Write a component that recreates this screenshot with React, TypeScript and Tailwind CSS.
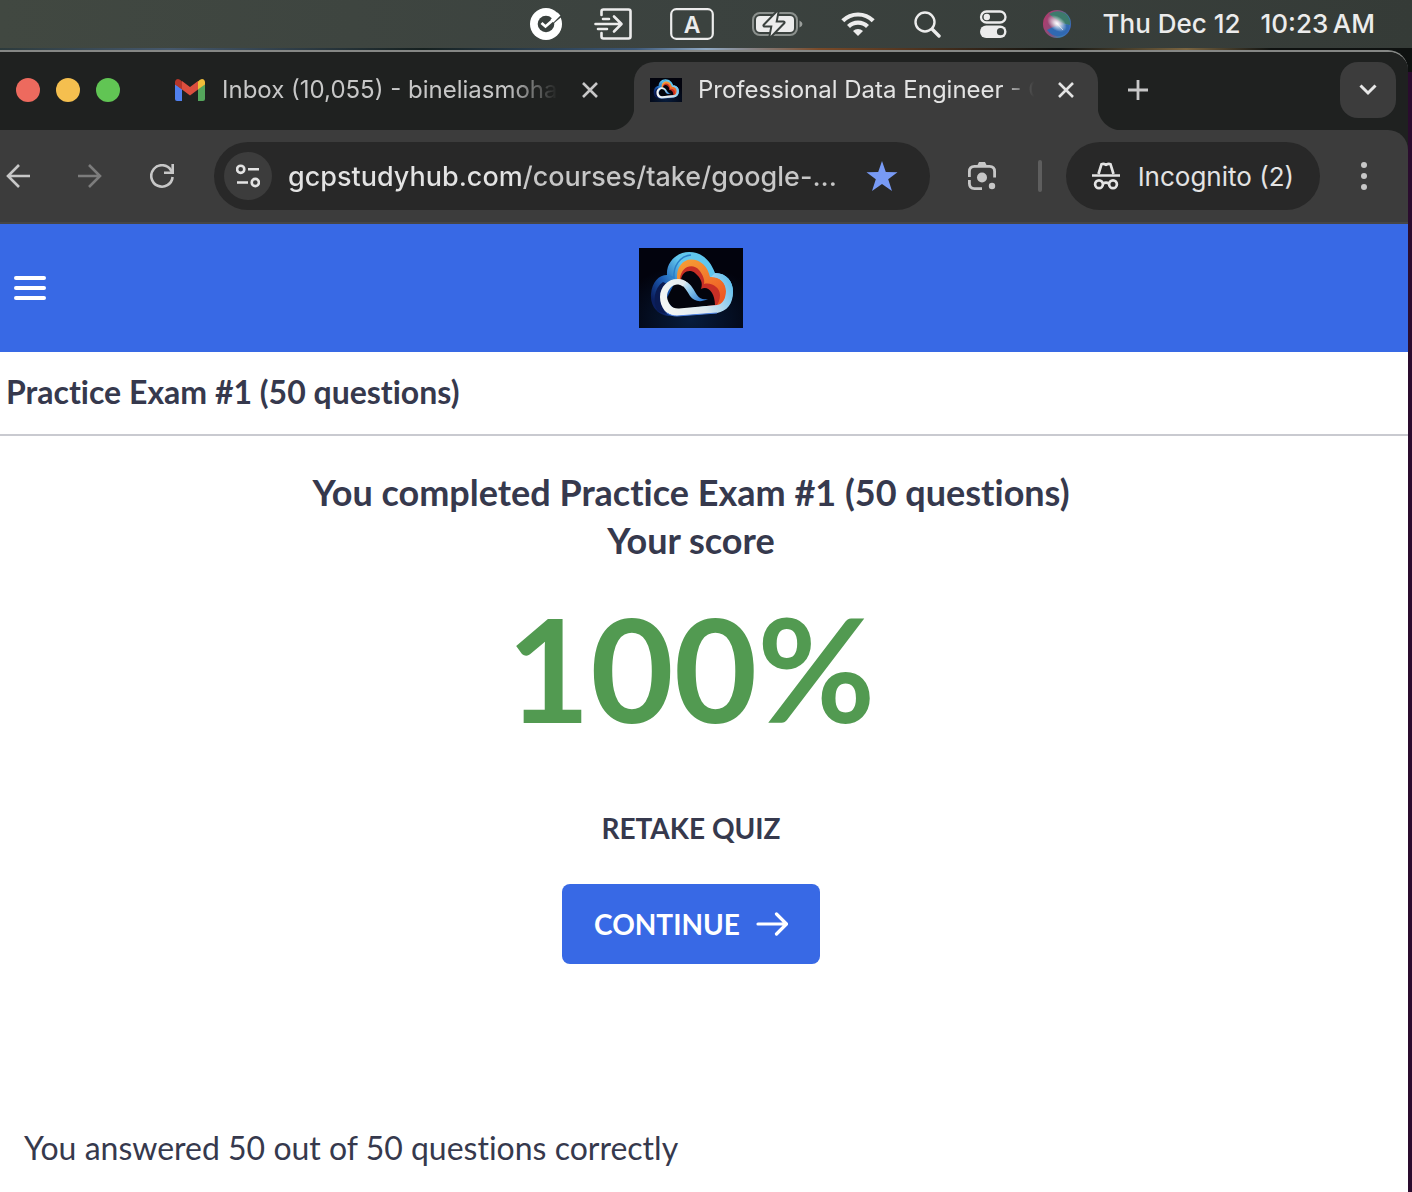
import React from "react";

function CloudLogo({ className, id }: { className: string; id: string }) {
  return (
    <svg viewBox="0 0 104 80" preserveAspectRatio="none" className={className} role="img" aria-label="GCP Study Hub">
      <defs>
        <linearGradient id={id + "back"} x1="0" y1="0.7" x2="1" y2="0.2">
          <stop offset="0" stopColor="#0b1f5e" />
          <stop offset="0.22" stopColor="#1c5cb4" />
          <stop offset="0.5" stopColor="#62c8ee" />
          <stop offset="1" stopColor="#5ec4ee" />
        </linearGradient>
        <linearGradient id={id + "loop"} x1="0" y1="0.6" x2="1" y2="0.3">
          <stop offset="0" stopColor="#f4f6f4" />
          <stop offset="0.5" stopColor="#dfe9ee" />
          <stop offset="0.75" stopColor="#a8d4ee" />
          <stop offset="1" stopColor="#62c0ee" />
        </linearGradient>
        <linearGradient id={id + "swoosh"} gradientUnits="userSpaceOnUse" x1="44" y1="34" x2="64" y2="52">
          <stop offset="0" stopColor="#e6eef0" />
          <stop offset="0.4" stopColor="#8cc8ec" />
          <stop offset="1" stopColor="#2f7ad0" />
        </linearGradient>
        <linearGradient id={id + "fire"} x1="0" y1="0" x2="0.6" y2="1">
          <stop offset="0" stopColor="#f7a136" />
          <stop offset="1" stopColor="#ee5a24" />
        </linearGradient>
        <radialGradient id={id + "bg"} cx="0.5" cy="0.9" r="0.7">
          <stop offset="0" stopColor="#071c3c" />
          <stop offset="1" stopColor="#02030d" />
        </radialGradient>
      </defs>
      <rect width="104" height="80" fill={"url(#" + id + "bg)"} />
      <path d="M34 68C20 69 11 59 12 46C13 34 20 27 28 27C27 14 38 4 50 4C64 4 72 14 76 25C88 25 94 34 94 44C93 54 88 62 76 64Z" fill={"url(#" + id + "back)"} />
      <path d="M19 63C13 54 15 40 24 34L28 36C21 43 20 56 27 66Z" fill="#0a1b52" />
      <path d="M28 27C31 28 33 29 35 30C34 18 41 8 52 7" fill="none" stroke="#2a7fcb" strokeWidth="1.500" />
      <path d="M38 32C37 19 44 11.500 52 11.500C62 11.500 69 19 71 29C80 28 87 34 87 43C87 52 84 57 78 58L60 58Z" fill={"url(#" + id + "fire)"} />
      <path d="M41 31C42 18 54 15 60 22C64 27 66 32 65 36C73 34 81 40 81 47C81 52 79 56 77 58L60 58Z" fill="#c72f26" />
      <path d="M42 32C43 23 51 21 56 25C62 30 64 35 62 41C69 37 76 45 76 57L36 62L27 52L35 36Z" fill="#03040c" />
      <path d="M46 33C53 36 55 43 58 47C61 51 64 52 69 51C61 55 55 53 51 48C48 43 46 39 42 37Z" fill={"url(#" + id + "swoosh)"} />
      <path d="M94 44C94 56 88 63 78 65L38 68C28 68 21 60 21 49C21 38 30 30 40 31C43 31 45 32 47 33.500L44 38.500C42 37 40 36.500 38 36.500C32 37 28 43 28 49C29 56 33 61 40 60.500L78 57C84 56 87 50 87 43C87 35 81 29 72 29L76 25C88 25 94 34 94 44Z" fill={"url(#" + id + "loop)"} />
      <path d="M78 65L38 68C34 68 31 67 28 65" fill="none" stroke="#4a7fe0" strokeWidth="1" />
    </svg>
  );
}

function MenuBar() {
  return (
    <div className="flex h-12 items-center justify-end gap-[38px] bg-[#3a413d] bg-linear-to-r from-[#414841] via-[#3b423f] to-[#353b37] pr-[37px] text-[#ececec]">
      <div className="flex items-center gap-8">
        <svg viewBox="0 0 32 32" className="size-8">
          <circle cx="16" cy="16" r="16" fill="#fff" />
          <circle cx="16" cy="16" r="8.3" fill="#3a413e" />
          <path d="M17 19L32 6.500" fill="none" stroke="#3a413e" strokeWidth="3" />
          <path d="M22 13L29 6" fill="none" stroke="#fff" strokeWidth="4" />
          <path d="M11.500 15L15.500 18.500L23 12" fill="none" stroke="#fff" strokeWidth="2.800" />
        </svg>
        <svg viewBox="0 0 38 32" className="h-8 w-[38px]" fill="none" stroke="currentColor" strokeWidth="2.600" strokeLinecap="round" strokeLinejoin="round">
          <path d="M7.500 7V3.500Q7.500 1.500 9.500 1.500H34.500Q36.500 1.500 36.500 3.500V28.500Q36.500 30.500 34.500 30.500H9.500Q7.500 30.500 7.500 28.500V25" />
          <path d="M1.500 16H27M20 8.500L27.500 16L20 23.500M9 11H15M4 21H13" />
        </svg>
      </div>
      <svg viewBox="0 0 44 32" className="h-8 w-11">
        <rect x="1.200" y="1.200" width="41.600" height="29.600" rx="5" fill="none" stroke="currentColor" strokeWidth="2.200" />
        <text x="22" y="24.500" textAnchor="middle" fill="currentColor" fontFamily="Inter, sans-serif" fontWeight="600" fontSize="23">A</text>
      </svg>
      <svg viewBox="0 0 51 26" className="h-[26px] w-[51px]">
        <rect x="1" y="2" width="44" height="22" rx="7" fill="none" stroke="#8b908d" strokeWidth="2" />
        <path d="M47.500 9.500Q50.500 11 50.500 13T47.500 16.500Z" fill="#9a9e9b" />
        <rect x="4" y="5" width="38" height="16" rx="4" fill="currentColor" />
        <path d="M25.500 1L12.500 14.500H20.500L18.500 25L31.500 11.500H23.500Z" fill="currentColor" stroke="#3a413e" strokeWidth="4" strokeLinejoin="round" />
        <path d="M25.500 1L12.500 14.500H20.500L18.500 25L31.500 11.500H23.500Z" fill="currentColor" />
      </svg>
      <svg viewBox="0 0 34 26" className="h-[26px] w-[34px]" fill="none" stroke="currentColor" strokeWidth="4.200">
        <path d="M1.800 9.800A21.500 21.500 0 0 1 32.200 9.800" />
        <path d="M7.500 15.500A13.500 13.500 0 0 1 26.500 15.500" />
        <path d="M12 20A7.200 7.200 0 0 1 22 20L17 25Z" fill="currentColor" stroke="none" />
      </svg>
      <svg viewBox="0 0 28 28" className="size-7" fill="none" stroke="currentColor" strokeLinecap="round">
        <circle cx="12" cy="12" r="9.500" strokeWidth="2.400" />
        <path d="M19.500 19.500L26 26" strokeWidth="3.400" />
      </svg>
      <div className="flex items-center gap-9">
        <svg viewBox="0 0 28 28" className="size-7" fill="none" stroke="currentColor">
          <rect x="2" y="1.500" width="24.500" height="11" rx="5.500" strokeWidth="2.300" />
          <circle cx="7.800" cy="7" r="3.200" fill="currentColor" stroke="none" />
          <rect x="1" y="15.500" width="26.500" height="12.500" rx="6.200" fill="currentColor" stroke="none" />
          <circle cx="21.500" cy="21.700" r="3.600" fill="#3a413e" stroke="none" />
        </svg>
        <svg viewBox="0 0 28 28" className="size-7">
          <defs>
            <radialGradient id="siriGlow" cx="0.5" cy="0.5" r="0.5">
              <stop offset="0" stopColor="#fff" />
              <stop offset="0.25" stopColor="#fff" stopOpacity="0.8" />
              <stop offset="1" stopColor="#fff" stopOpacity="0" />
            </radialGradient>
            <linearGradient id="siriBase" x1="0" y1="0.3" x2="1" y2="0.7">
              <stop offset="0" stopColor="#b23a6c" />
              <stop offset="0.45" stopColor="#84517d" />
              <stop offset="0.75" stopColor="#3c7fae" />
              <stop offset="1" stopColor="#3b62c4" />
            </linearGradient>
          </defs>
          <circle cx="14" cy="14" r="14" fill="url(#siriBase)" />
          <path d="M6 4Q15-2 24 5Q28 10 27 15Q18 14 6 4Z" fill="#3d7a6c" />
          <path d="M4 20Q12 30 22 24Q27 20 26 15Q14 14 4 20Z" fill="#3069b2" />
          <ellipse cx="14" cy="13.500" rx="11" ry="7" fill="url(#siriGlow)" transform="rotate(35 14 13.500)" />
          <path d="M14 13.500L20 20" stroke="#fff" strokeOpacity="0.6" />
        </svg>
        <div className="-ml-1 flex gap-5 text-[26px] leading-8 font-medium whitespace-nowrap">
          <span>Thu Dec 12</span>
          <span>10:23{"\u2009"}AM</span>
        </div>
      </div>
    </div>
  );
}

function CloseIcon() {
  return (
    <svg viewBox="0 0 16 16" className="size-4" fill="none" stroke="currentColor" strokeWidth="2.600">
      <path d="M1 1L15 15M15 1L1 15" />
    </svg>
  );
}

function TabStrip() {
  return (
    <div className="flex h-[78px] items-start bg-[#1f2120] pt-2.5 pr-3 pl-4">
      <div className="flex h-14 shrink-0 items-center gap-4">
        <button aria-label="Close window" className="size-6 rounded-full bg-[#ed6a5e]" />
        <button aria-label="Minimize window" className="size-6 rounded-full bg-[#f5bf4f]" />
        <button aria-label="Zoom window" className="size-6 rounded-full bg-[#61c554]" />
      </div>
      <div className="ml-[55px] flex h-14 w-[459px] min-w-0 items-center text-[#c7c7c7]">
        <svg viewBox="0 0 30 22" className="h-[22px] w-[30px] shrink-0">
          <path d="M0 5L7 10V22H2Q0 22 0 20Z" fill="#5080ee" />
          <path d="M30 5L23 10V22H28Q30 22 30 20Z" fill="#54a55b" />
          <path d="M23 2.500V10.500L30 5.500V3Q29.500 0 27 0Q25 0 23 2.500Z" fill="#f0bd3a" />
          <path d="M7 2.500V10.500L0 5.500V3Q0.500 0 3 0Q5 0 7 2.500Z" fill="#b5362a" />
          <path d="M7 2L15 8L23 2V10.500L15 16.500L7 10.500Z" fill="#dc4e3e" />
        </svg>
        <span className="ml-[17px] min-w-0 flex-1 overflow-hidden text-2xl whitespace-nowrap mask-r-from-85%">Inbox (10,055) - bineliasmoha</span>
        <button aria-label="Close tab" className="ml-6 flex size-4 shrink-0 items-center justify-center">
          <CloseIcon />
        </button>
        <span className="w-9 shrink-0" />
      </div>
      <div className="relative flex h-[68px] w-[464px] min-w-0 items-center rounded-t-[20px] bg-[#3c3c3c] pr-6 pb-3 pl-4 text-[#e3e3e3]">
        <span className="absolute bottom-0 -left-6 size-6 bg-[radial-gradient(circle_at_0_0,transparent_24px,#3c3c3c_25px)]" />
        <span className="absolute -right-6 bottom-0 size-6 bg-[radial-gradient(circle_at_100%_0,transparent_24px,#3c3c3c_25px)]" />
        <CloudLogo id="tab" className="h-6 w-8 shrink-0" />
        <span className="ml-4 min-w-0 flex-1 overflow-hidden text-2xl whitespace-nowrap mask-r-from-90%">Professional Data Engineer - G</span>
        <button aria-label="Close tab" className="ml-6 flex size-4 shrink-0 items-center justify-center">
          <CloseIcon />
        </button>
      </div>
      <button aria-label="New tab" className="ml-[30px] flex h-14 w-5 shrink-0 items-center justify-center text-[#c7c7c7]">
        <svg viewBox="0 0 20 20" className="size-5" stroke="currentColor" strokeWidth="2.800">
          <path d="M0 10H20M10 0V20" />
        </svg>
      </button>
      <button aria-label="Search tabs" className="ml-auto flex size-14 shrink-0 items-center justify-center rounded-[18px] bg-[#3c3c3c] text-[#e8e8e8]">
        <svg viewBox="0 0 18 12" className="h-3 w-[18px]" fill="none" stroke="currentColor" strokeWidth="3">
          <path d="M1.500 1.500L9 9L16.500 1.500" />
        </svg>
      </button>
    </div>
  );
}

function Toolbar() {
  return (
    <div className="flex h-[94px] items-center rounded-tr-[20px] border-b-2 border-[#464646] bg-[#3c3c3c] pr-[38px] pl-1.5 text-[#c7c7c7]">
      <div className="flex shrink-0 items-center gap-12">
        <button aria-label="Back">
          <svg viewBox="0 0 24 24" className="size-6" fill="none" stroke="currentColor" strokeWidth="2.600">
            <path d="M24 12H2M13 1L2 12L13 23" />
          </svg>
        </button>
        <button aria-label="Forward" className="text-[#7c7c7c]">
          <svg viewBox="0 0 24 24" className="size-6" fill="none" stroke="currentColor" strokeWidth="2.600">
            <path d="M0 12H22M11 1L22 12L11 23" />
          </svg>
        </button>
        <button aria-label="Reload">
          <svg viewBox="0 0 24 24" className="size-6" fill="none" stroke="currentColor" strokeWidth="2.600">
            <path d="M22.600 13A10.700 10.700 0 1 1 21 6.200L22 8" />
            <path d="M22.700 0V8.700H14" />
          </svg>
        </button>
      </div>
      <div className="ml-10 flex h-[68px] min-w-0 flex-1 items-center rounded-full bg-[#282828] pr-8 pl-2.5">
        <button aria-label="View site information" className="flex size-12 shrink-0 items-center justify-center rounded-full bg-[#3c3c3c] text-[#e3e3e3]">
          <svg viewBox="0 0 24 24" className="size-6" fill="none" stroke="currentColor" strokeWidth="2.600">
            <circle cx="4.700" cy="5.300" r="3.600" />
            <path d="M12 5.300H23M1 18.500H12" />
            <circle cx="19.300" cy="18.500" r="3.600" />
          </svg>
        </button>
        <input
          aria-label="Address and search bar"
          defaultValue="gcpstudyhub.com/courses/take/google-..."
          className="ml-4 w-full min-w-0 flex-1 bg-[linear-gradient(90deg,#e3e3e3_236px,#c7c7c7_236px)] bg-clip-text pt-0.5 text-[27px] leading-10 font-medium text-transparent outline-none"
        />
        <button aria-label="Edit bookmark" className="ml-4 shrink-0 text-[#789af5]">
          <svg viewBox="0 0 32 30" className="h-[30px] w-8">
            <path d="M16 0L19.800 11L31.500 11.200L22.200 18.300L26 30L16 23L6 30L9.800 18.300L0.500 11.200L12.200 11Z" fill="currentColor" />
          </svg>
        </button>
      </div>
      <button aria-label="Search with Google Lens" className="ml-[38px] shrink-0">
        <svg viewBox="0 0 28 28" className="size-7" fill="none" stroke="currentColor" strokeWidth="2.800">
          <path d="M1.400 15V9.500Q1.400 4.400 6.500 4.400H21.500Q26.600 4.400 26.600 9.500V15.500M1.400 18V21.500Q1.400 26.600 6.500 26.600H14" />
          <path d="M9 4L11 0H17L19 4Z" fill="currentColor" stroke="none" />
          <circle cx="14" cy="15.500" r="5" fill="currentColor" stroke="none" />
          <circle cx="24" cy="24" r="3.200" fill="currentColor" stroke="none" />
        </svg>
      </button>
      <span className="ml-[42px] h-8 w-1 shrink-0 rounded-full bg-[#5e5e5e]" />
      <button className="ml-6 flex h-[68px] shrink-0 items-center rounded-full bg-[#282828] px-[26px] text-[#e3e3e3]">
        <svg viewBox="0 0 28 28" className="size-7" fill="none" stroke="currentColor" strokeWidth="2.700">
          <path d="M0 13.500H28" />
          <path d="M6.500 12L9.500 2.200Q11.500 1.500 14 2.700Q16.500 1.500 18.500 2.200L21.500 12" />
          <circle cx="7" cy="22.200" r="3.900" />
          <circle cx="21" cy="22.200" r="3.900" />
          <path d="M11 21.500Q14 19.800 17 21.500" />
        </svg>
        <span className="ml-[18px] pt-0.5 text-[26px] leading-10 whitespace-nowrap">Incognito (2)</span>
      </button>
      <button aria-label="Browser menu" className="ml-[38px] flex w-3 shrink-0 flex-col items-center gap-[5px]">
        <span className="size-1.5 rounded-full bg-current" />
        <span className="size-1.5 rounded-full bg-current" />
        <span className="size-1.5 rounded-full bg-current" />
      </button>
    </div>
  );
}

function QuizPage() {
  return (
    <div className="flex flex-1 flex-col bg-white font-['Lato',sans-serif] text-[#36394d] [font-variant-ligatures:no-common-ligatures]">
      <header className="flex h-32 items-center bg-[#3869e5] pr-[26px] pl-3.5">
        <button aria-label="Open course menu" className="flex w-8 shrink-0 flex-col gap-1.5">
          <span className="h-1 rounded-full bg-white" />
          <span className="h-1 rounded-full bg-white" />
          <span className="h-1 rounded-full bg-white" />
        </button>
        <div className="flex flex-1 justify-center pr-[46px]">
          <CloudLogo id="header" className="h-20 w-[104px]" />
        </div>
      </header>
      <h1 className="border-b-2 border-[#c9cad0] pt-4 pb-[18px] pl-1.5 text-[32px] leading-12 font-bold">Practice Exam #1 (50 questions)</h1>
      <main className="flex flex-col items-center pt-8 pr-[26px]">
        <h2 className="text-center text-4xl leading-12 font-bold">
          You completed Practice Exam #1 (50 questions)
          <br />
          Your score
        </h2>
        <p className="mt-6 text-[144px] leading-40 font-bold text-[#529a51]">100%</p>
        <button className="mt-[60px] text-[28px] leading-10 font-bold">RETAKE QUIZ</button>
        <button className="mt-9 flex h-20 items-center gap-4 rounded-lg bg-[#3869e5] px-8 text-[28px] leading-10 font-bold text-white">
          CONTINUE
          <svg viewBox="0 0 32 24" className="h-6 w-8" fill="none" stroke="currentColor" strokeWidth="3.200" strokeLinecap="round" strokeLinejoin="round">
            <path d="M2 12H30M20.500 2L30.500 12L20.500 22" />
          </svg>
        </button>
      </main>
      <p className="mt-40 pb-5 pl-6 text-[32px] leading-12">You answered 50 out of 50 questions correctly</p>
    </div>
  );
}

export default function App() {
  return (
    <div className="flex min-h-screen flex-col bg-[#2a0c2e] font-['Inter',sans-serif]">
      <MenuBar />
      <div className="flex flex-1 flex-col bg-[linear-gradient(90deg,#2c3a3c,#46586c_12%,#15201f_30%,#3d5878_45%,#8fa9c4_50%,#7a4a28_58%,#0e1110_75%,#7a6440_84%,#0e1110_90%)] bg-[length:100%_24px] bg-no-repeat pt-0.5">
        <div className="mr-1 flex flex-1 flex-col overflow-hidden rounded-tr-[20px] border-t-2 border-[#858785] bg-[#1f2120]">
          <TabStrip />
          <Toolbar />
          <QuizPage />
        </div>
      </div>
    </div>
  );
}
